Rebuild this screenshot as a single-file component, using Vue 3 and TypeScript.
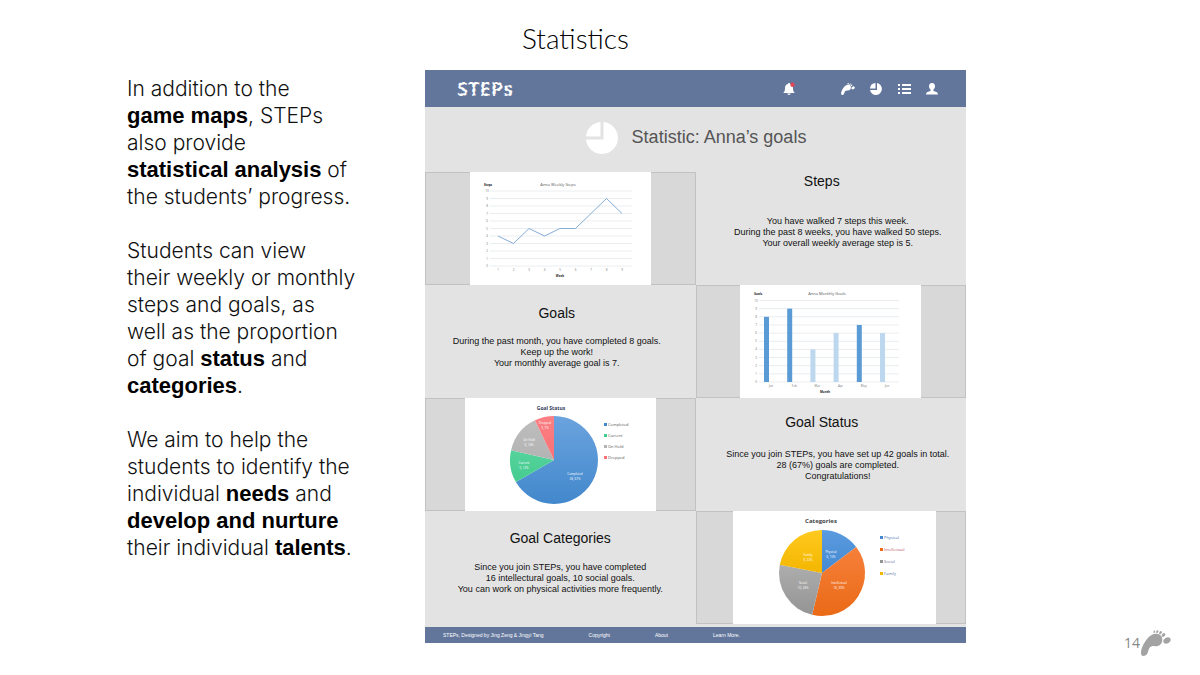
<script setup lang="ts">
interface Slice {
  name: string
  count: number
  from: string
  to: string
  label: [number, number]
  ink?: string
}

interface Wedge extends Slice {
  path: string
  caption: string
}

const steps: number[] = [4, 3, 5, 4, 5, 5, 7, 9, 7]
const scale: number[] = [0, 1, 2, 3, 4, 5, 6, 7, 8, 9, 10]

const stepY = (value: number): number => 94 - value * 7.5
const stepX = (index: number): number => 28 + index * 15.5
const stepLine: string = steps.map((v, i) => `${stepX(i)},${stepY(v)}`).join(' ')

const months = [
  { name: 'Jan', goals: 8, strong: true },
  { name: 'Feb', goals: 9, strong: true },
  { name: 'Mar', goals: 4, strong: false },
  { name: 'Apr', goals: 6, strong: false },
  { name: 'May', goals: 7, strong: true },
  { name: 'Jun', goals: 6, strong: false },
]
const goalY = (value: number): number => 97 - value * 8.15
const goalX = (index: number): number => 24 + index * 23.2

function wedges(slices: Slice[], cx: number, cy: number, r: number): Wedge[] {
  const total = slices.reduce((sum, s) => sum + s.count, 0)
  let start = 0
  return slices.map((s) => {
    const end = start + s.count / total
    const point = (t: number): string => {
      const a = t * Math.PI * 2
      return `${(cx + r * Math.sin(a)).toFixed(2)} ${(cy - r * Math.cos(a)).toFixed(2)}`
    }
    const large = end - start > 0.5 ? 1 : 0
    const path = `M${cx} ${cy}L${point(start)}A${r} ${r} 0 ${large} 1 ${point(end)}Z`
    const caption = `${s.count}, ${Math.round((s.count / total) * 100)}%`
    start = end
    return { ...s, path, caption }
  })
}

const status = wedges(
  [
    { name: 'Completed', count: 28, from: '#6ba3de', to: '#4288cc', label: [110, 77] },
    { name: 'Current', count: 5, from: '#55d39c', to: '#45cb90', label: [59, 66] },
    { name: 'On Hold', count: 6, from: '#bdbdbd', to: '#b3b3b3', label: [64, 43] },
    { name: 'Dropped', count: 3, from: '#fb7f83', to: '#f87276', label: [80, 26] },
  ],
  89, 62, 44,
)

const categories = wedges(
  [
    { name: 'Physical', count: 6, from: '#5b9be0', to: '#4489d0', label: [98, 42], ink: '#4a76b8' },
    { name: 'Intellectual', count: 16, from: '#f6803a', to: '#ea6a17', label: [106, 73], ink: '#b8506a' },
    { name: 'Social', count: 10, from: '#adadad', to: '#949494', label: [70, 73], ink: '#6a6a9a' },
    { name: 'Family', count: 9, from: '#ffc91f', to: '#f3b600', label: [75, 45], ink: '#5a78a8' },
  ],
  89, 62, 43,
)
</script>

<template>
  <div class="slide">
    <svg class="defs" aria-hidden="true">
      <symbol id="foot" viewBox="0 0 30 26">
        <path d="M0 23C0 18 3 13 6 9C9 5 13 3 17 4C21 5 22 9 21 12C20 15 17 17 13 16C9 16 8 18 7 22C6 25 4 26 2 26C1 26 0 25 0 23Z" />
        <ellipse cx="26" cy="10.500" rx="3.800" ry="2.900" transform="rotate(-30 26 10.5)" />
        <ellipse cx="22.500" cy="5" rx="2.200" ry="1.500" transform="rotate(-45 22.5 5)" />
        <ellipse cx="19.500" cy="2.600" rx="1.800" ry="1.200" transform="rotate(-55 19.5 2.6)" />
        <ellipse cx="16.300" cy="1.600" rx="1.500" ry="1" transform="rotate(-65 16.3 1.6)" />
        <ellipse cx="13.300" cy="1.800" rx="1.300" ry=".8" transform="rotate(-75 13.3 1.8)" />
      </symbol>
      <symbol id="pie" viewBox="0 0 32 32">
        <path d="M17.500 0A16 16 0 1 1 0 17.500H17.500Z" />
        <path d="M14.500 0V14.500H0A16 16 0 0 1 14.500 0Z" />
      </symbol>
      <symbol id="pie-small" viewBox="0 0 14 14">
        <path d="M8 1A6 6 0 1 1 1 8H8Z" />
        <path d="M6.500 1V6.500H1A6 6 0 0 1 6.500 1Z" />
      </symbol>
    </svg>

    <h1 class="title">Statistics</h1>

    <main class="content">
      <section class="copy">
        <p>
          In addition to the<br />
          <b>game maps</b>, STEPs<br />
          also provide<br />
          <b>statistical analysis</b> of<br />
          the students’ progress.
        </p>
        <p>
          Students can view<br />
          their weekly or monthly<br />
          steps and goals, as<br />
          well as the proportion<br />
          of goal <b>status</b> and<br />
          <b>categories</b>.
        </p>
        <p>
          We aim to help the<br />
          students to identify the<br />
          individual <b>needs</b> and<br />
          <b>develop and nurture</b><br />
          their individual <b>talents</b>.
        </p>
      </section>

      <article class="app">
        <header class="bar">
          <svg class="logo" viewBox="0 0 70 28" role="img" aria-label="STEPs">
            <text x="1" y="21">STEPs</text>
          </svg>
          <nav class="tools" aria-label="Main">
            <button class="tool bell" type="button" aria-label="Notifications">
              <svg viewBox="0 0 14 14">
                <path d="M7 1C7.800 1 8 1.500 8 2C10.300 2.500 11 4.200 11 6.500C11 9 11.800 9.800 12.800 11H1.200C2.200 9.800 3 9 3 6.500C3 4.200 3.700 2.500 6 2C6 1.500 6.200 1 7 1ZM5.200 11.600H8.800C8.500 13.400 5.500 13.400 5.200 11.600Z" />
                <circle cx="10.500" cy="2.800" r="2.200" fill="#e0485a" />
              </svg>
            </button>
            <button class="tool" type="button" aria-label="Steps"><svg viewBox="0 0 14 14"><use href="#foot" y="1" width="14" height="12" /></svg></button>
            <button class="tool" type="button" aria-label="Statistics"><svg><use href="#pie-small" /></svg></button>
            <button class="tool" type="button" aria-label="Goals">
              <svg viewBox="0 0 14 14">
                <path d="M1 2H3V4H1ZM5 2H14V4H5ZM1 6H3V8H1ZM5 6H14V8H5ZM1 10H3V12H1ZM5 10H14V12H5Z" />
              </svg>
            </button>
            <button class="tool" type="button" aria-label="Profile">
              <svg viewBox="0 0 14 14">
                <path d="M7 1C9 1 10 2.500 10 4.300C10 6 9.200 7 8.400 7.800V9C10.500 9.600 13 10.200 13 12.500H1C1 10.200 3.500 9.600 5.600 9V7.800C4.800 7 4 6 4 4.300C4 2.500 5 1 7 1Z" />
              </svg>
            </button>
          </nav>
        </header>

        <div class="heading">
          <svg class="heading-icon" aria-hidden="true"><use href="#pie" /></svg>
          <h2>Statistic: Anna’s goals</h2>
        </div>

        <div class="cells">
          <div class="chart">
            <svg class="card" viewBox="0 0 181 113">
              <text class="bold" x="18" y="14">Steps</text>
              <text class="name" x="88" y="14">Anna Weekly Steps</text>
              <g v-for="v in scale" :key="v">
                <path class="grid" :d="`M20 ${stepY(v)}H162`" />
                <text class="tick" x="17" :y="stepY(v) + 1">{{ v }}</text>
              </g>
              <polyline class="series" :points="stepLine" />
              <text v-for="(s, i) in steps" :key="i" class="tick" :x="stepX(i)" y="99">{{ i + 1 }}</text>
              <text class="bold" x="90" y="105">Week</text>
            </svg>
          </div>
          <section class="note right steps">
            <h3>Steps</h3>
            <p>
              You have walked 7 steps this week.<br />
              During the past 8 weeks, you have walked 50 steps.<br />
              Your overall weekly average step is 5.
            </p>
          </section>

          <section class="note goals">
            <h3>Goals</h3>
            <p>
              During the past month, you have completed 8 goals.<br />
              Keep up the work!<br />
              Your monthly average goal is 7.
            </p>
          </section>
          <div class="chart">
            <svg class="card" viewBox="0 0 181 113">
              <text class="bold" x="18" y="10">Goals</text>
              <text class="name" x="87" y="10">Anna Monthly Goals</text>
              <g v-for="v in scale" :key="v">
                <path class="grid" :d="`M19 ${goalY(v)}H159`" />
                <text class="tick" x="16" :y="goalY(v) + 1">{{ v }}</text>
              </g>
              <g v-for="(m, i) in months" :key="m.name">
                <rect :class="m.strong ? 'strong' : 'soft'" :x="goalX(i)" :y="goalY(m.goals)" width="5" :height="97 - goalY(m.goals)" />
                <text class="tick" :x="goalX(i) + 7" y="102">{{ m.name }}</text>
              </g>
              <text class="bold" x="85" y="108">Month</text>
            </svg>
          </div>

          <div class="chart">
            <svg class="card wide" viewBox="0 0 191 113">
              <defs>
                <linearGradient v-for="(s, i) in status" :id="`status-${i}`" :key="s.name" x2="0" y2="1">
                  <stop offset="0" :stop-color="s.from" />
                  <stop offset="1" :stop-color="s.to" />
                </linearGradient>
              </defs>
              <text class="pie-title navy" x="86" y="12">Goal Status</text>
              <g v-for="(s, i) in status" :key="s.name">
                <path :d="s.path" :fill="`url(#status-${i})`" />
                <rect x="139" :y="25 + i * 11" width="3" height="3" :fill="s.to" />
                <text class="legend" x="143" :y="28 + i * 11" fill="#555">{{ s.name }}</text>
              </g>
              <g v-for="s in status" :key="s.name" class="slice">
                <text :x="s.label[0]" :y="s.label[1]">{{ s.name }}</text>
                <text :x="s.label[0]" :y="s.label[1] + 5">{{ s.caption }}</text>
              </g>
            </svg>
          </div>
          <section class="note right status">
            <h3>Goal Status</h3>
            <p>
              Since you join STEPs, you have set up 42 goals in total.<br />
              28 (67%) goals are completed.<br />
              Congratulations!
            </p>
          </section>

          <section class="note categories">
            <h3>Goal Categories</h3>
            <p>
              Since you join STEPs, you have completed<br />
              16 intellectural goals, 10 social goals.<br />
              You can work on physical activities more frequently.
            </p>
          </section>
          <div class="chart shifted">
            <svg class="card widest" viewBox="0 0 203 113">
              <defs>
                <linearGradient v-for="(s, i) in categories" :id="`category-${i}`" :key="s.name" x2="0" y2="1">
                  <stop offset="0" :stop-color="s.from" />
                  <stop offset="1" :stop-color="s.to" />
                </linearGradient>
              </defs>
              <text class="pie-title big" x="88" y="12">Categories</text>
              <g v-for="(s, i) in categories" :key="s.name">
                <path :d="s.path" :fill="`url(#category-${i})`" />
                <rect x="147" :y="25 + i * 12" width="3" height="3" :fill="s.to" />
                <text class="legend" x="151" :y="28 + i * 12" :fill="s.ink">{{ s.name }}</text>
              </g>
              <g v-for="s in categories" :key="s.name" class="slice">
                <text :x="s.label[0]" :y="s.label[1]">{{ s.name }}</text>
                <text :x="s.label[0]" :y="s.label[1] + 5">{{ s.caption }}</text>
              </g>
            </svg>
          </div>
        </div>

        <footer class="foot">
          <span>STEPs, Designed by Jing Zeng &amp; Jingyi Tang</span>
          <a href="#copyright">Copyright</a>
          <a href="#about">About</a>
          <a href="#more">Learn More.</a>
        </footer>
      </article>

      <div class="page">
        <span>14</span>
        <svg aria-hidden="true"><use href="#foot" /></svg>
      </div>
    </main>
  </div>
</template>

<style>
body {
  margin: 0;
  background: #fff;
}
</style>

<style scoped>
.slide {
  display: flex;
  flex-direction: column;
  min-height: 100vh;
  box-sizing: border-box;
  color: #111;
  font-family: "Liberation Sans", Arial, sans-serif;
}

.defs {
  display: none;
}

.title {
  margin: 0;
  height: 70px;
  box-sizing: border-box;
  padding: 21px 49px 0 0;
  font: 300 28px/34px Lato, sans-serif;
  text-align: center;
  color: #000;
}

.content {
  flex: 1;
  display: grid;
  grid-template-columns: 298fr 541fr 234fr;
  align-items: start;
  padding: 0 0 19px 127px;
}

.copy {
  display: flex;
  flex-direction: column;
  gap: 27px;
  padding-top: 5px;
  font: 300 21px/27px Inter, "Liberation Sans", sans-serif;
  white-space: nowrap;
}

.copy p {
  margin: 0;
}

.copy b {
  font: 700 22px/27px "Liberation Sans", Arial, sans-serif;
  color: #000;
}

.app {
  background: #e3e3e3;
}

.bar {
  display: flex;
  align-items: center;
  justify-content: space-between;
  height: 37px;
  padding: 0 26px 0 31px;
  background: #62769b;
}

.logo {
  width: 70px;
  height: 28px;
}

.logo text {
  font: 700 20px "Open Sans", sans-serif;
  fill: #fff;
  stroke: #62769b;
  stroke-width: 1;
  stroke-dasharray: 2 3;
}

.tools {
  display: flex;
  gap: 12px;
}

.tool {
  display: flex;
  align-items: center;
  justify-content: center;
  width: 16px;
  height: 16px;
  padding: 0;
  border: 0;
  background: none;
  fill: #fff;
}

.tool svg {
  width: 14px;
  height: 14px;
}

.bell {
  margin-right: 31px;
}

.heading {
  display: flex;
  align-items: center;
  justify-content: center;
  gap: 14px;
  height: 65px;
  box-sizing: border-box;
  padding: 0 0 4px 1px;
  color: #555;
}

.heading-icon {
  width: 32px;
  height: 32px;
  fill: #fff;
}

.heading h2 {
  margin: 0;
  font-size: 18px;
  font-weight: 400;
}

.cells {
  display: grid;
  grid-template-columns: 1fr 1fr;
  grid-auto-rows: 113px;
  padding-bottom: 3px;
}

.chart {
  display: flex;
  justify-content: center;
  background: #d8d8d8;
  box-shadow: inset 0 0 0 1px #c2c2c2;
}

.shifted {
  padding-left: 8px;
}

.card {
  width: 181px;
  height: 113px;
  background: #fff;
  font-family: "Open Sans", "Noto Sans", sans-serif;
  text-anchor: middle;
}

.wide {
  width: 191px;
}

.widest {
  width: 203px;
}

.bold {
  font-size: 3px;
  font-weight: 700;
  fill: #222;
}

.name {
  font-size: 4px;
  fill: #555;
}

.grid {
  stroke: #e9edf0;
  stroke-width: 1;
}

.tick {
  font-size: 3px;
  fill: #777;
}

.series {
  fill: none;
  stroke: #86add6;
  stroke-width: 1;
}

.strong {
  fill: #5b9bd5;
}

.soft {
  fill: #bdd7ee;
}

.pie-title {
  font-size: 5px;
  font-weight: 700;
  fill: #444;
}

.navy {
  fill: #33395c;
}

.big {
  font-size: 6px;
}

.legend {
  font-size: 4px;
  text-anchor: start;
}

.slice {
  font-size: 3px;
  fill: #fff;
}

.note {
  text-align: center;
  white-space: nowrap;
  color: #111;
}

.note h3 {
  margin: 0;
  font-size: 14px;
  font-weight: 400;
  line-height: 16px;
}

.note p {
  margin: 0;
  font-size: 9px;
  line-height: 11px;
}

.right h3 {
  padding-right: 18px;
}

.right p {
  padding-left: 14px;
}

.steps {
  padding-top: 1px;
}

.steps h3 {
  margin-bottom: 27px;
}

.goals {
  padding: 20px 7px 0 0;
}

.goals h3 {
  margin-bottom: 15px;
}

.status {
  padding-top: 16px;
}

.status h3 {
  margin-bottom: 19px;
}

.categories {
  padding-top: 19px;
}

.categories h3 {
  margin-bottom: 16px;
}

.foot {
  display: flex;
  align-items: center;
  gap: 45px;
  height: 16px;
  padding-left: 18px;
  background: #62769b;
  color: #fff;
  font-size: 5px;
}

.foot a {
  color: inherit;
  text-decoration: none;
}

.page {
  align-self: end;
  display: flex;
  align-items: center;
  justify-content: flex-end;
  gap: 1px;
  padding-right: 29px;
  color: #888;
  font: 400 14px/18px "Open Sans", sans-serif;
}

.page svg {
  width: 30px;
  height: 26px;
  fill: #a3a3a3;
}
</style>
